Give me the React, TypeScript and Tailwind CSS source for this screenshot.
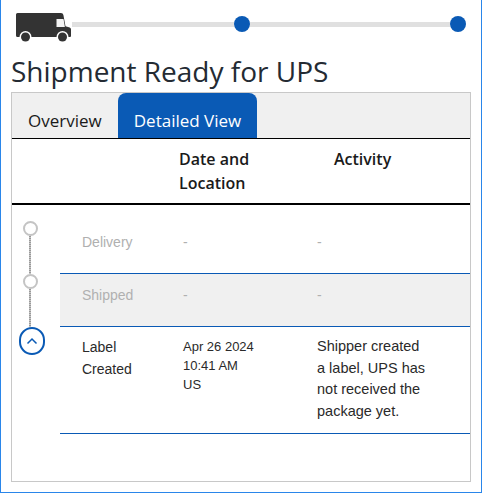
const sans = "font-['Open_Sans',sans-serif]";
const arial = "font-['Liberation_Sans',Arial,sans-serif]";

function Truck() {
  return (
    <svg width="56" height="37" viewBox="0 0 56 37" className="block">
      <path
        d="M1.500 7h43.500q2 0 2.400 2l2.100 11.200 4.200 1.300q1.300.4 1.300 2V30q0 1-1 1H1.500Q0 31 0 29.500V8.500Q0 7 1.500 7z"
        fill="#333333"
      />
      <path d="M40.500 13h7l1.400 8h-8.400z" fill="#f4f4f4" />
      <circle cx="9.500" cy="31" r="6" fill="#ffffff" />
      <circle cx="9.500" cy="31" r="4.500" fill="#333333" />
      <circle cx="46.500" cy="31" r="6" fill="#ffffff" />
      <circle cx="46.500" cy="31" r="4.500" fill="#333333" />
    </svg>
  );
}

function Progress() {
  return (
    <div className="flex items-center h-[37px] pl-[15px] pr-[15px]">
      <div className="mt-[11px] flex items-center">
        <Truck />
      </div>
      <div className="w-[162px] h-[5px] bg-[#e0e0e0] mt-[11px]" />
      <div className="w-4 h-4 rounded-full bg-[#0a5ab5] mt-[11px]" />
      <div className="flex-1 h-[5px] bg-[#e0e0e0] mt-[11px]" />
      <div className="w-4 h-4 rounded-full bg-[#0a5ab5] mt-[11px]" />
    </div>
  );
}

function Rail() {
  return (
    <div className="w-[48px] flex flex-col items-start pl-[11px] pt-[16px] shrink-0">
      <div className="w-[15px] h-[15px] rounded-full border-2 border-[#c4c4c4] shrink-0" />
      <div className="h-[38px] w-[2px] bg-[repeating-linear-gradient(#999999_0_1px,#c8c8c8_1px_2px)] ml-[6px]" />
      <div className="w-[15px] h-[15px] rounded-full border-2 border-[#c4c4c4] shrink-0" />
      <div className="h-[38px] w-[2px] bg-[repeating-linear-gradient(#999999_0_1px,#c8c8c8_1px_2px)] ml-[6px]" />
      <div className="w-[26px] h-[28px] rounded-full border-2 border-[#0a5ab5] bg-white flex items-center justify-center shrink-0 -ml-[4px]">
        <svg width="12" height="8" viewBox="0 0 12 8">
          <path d="M1.500 6.500L6 2l4.500 4.500" fill="none" stroke="#0a5ab5" strokeWidth="1.500" />
        </svg>
      </div>
    </div>
  );
}

export default function App() {
  return (
    <div className="w-[482px] h-[493px] bg-white border-x border-b border-[#2a86ea] overflow-hidden">
      <Progress />
      <h1 className={`${sans} text-[28px] leading-[37px] text-[#242b33] pl-[10px] mt-[16px] whitespace-nowrap`}>
        Shipment Ready for UPS
      </h1>
      <div className="ml-[10px] mt-[2px] w-[460px] h-[390px] border border-[#c8c8c8]">
        <div className={`${sans} flex items-end h-[46px] bg-[#f0f0f0] border-b border-black text-[17px]`}>
          <div className="w-[106px] h-full flex items-center pl-[16px] pt-[11px] text-[#1a1a1a]">Overview</div>
          <div className="w-[139px] h-full flex items-center justify-center pt-[11px] text-white bg-[#0a5ab5] rounded-t-[8px]">
            Detailed View
          </div>
        </div>
        <div className={`${sans} flex h-[66px] border-b-2 border-black text-[16px] leading-[24px] font-semibold text-[#1a1a1a] pt-[8px]`}>
          <div className="w-[167px] shrink-0" />
          <div className="w-[155px] shrink-0">
            Date and
            <br />
            Location
          </div>
          <div>Activity</div>
        </div>
        <div className="flex">
          <Rail />
          <div className={`${arial} flex-1 text-[14px] leading-[22px]`}>
            <div className="flex h-[69px] border-b border-[#0a5ab5] text-[#b0b0b0] pt-[26px]">
              <div className="w-[123px] pl-[22px] shrink-0">Delivery</div>
              <div className="w-[134px] shrink-0">-</div>
              <div>-</div>
            </div>
            <div className="flex h-[53px] border-b border-[#0a5ab5] bg-[#f0f0f0] text-[#b0b0b0] pt-[10px]">
              <div className="w-[123px] pl-[22px] shrink-0">Shipped</div>
              <div className="w-[134px] shrink-0">-</div>
              <div>-</div>
            </div>
            <div className="flex h-[107px] border-b border-[#0a5ab5] text-[#2a2a2a] pt-[9px]">
              <div className="w-[123px] pl-[22px] shrink-0">
                Label
                <br />
                Created
              </div>
              <div className="w-[134px] shrink-0 leading-[19px] text-[13px] pt-[1px]">
                Apr 26 2024
                <br />
                10:41 AM
                <br />
                US
              </div>
              <div className="leading-[21.700px] text-[14.500px]">
                Shipper created
                <br />
                a label, UPS has
                <br />
                not received the
                <br />
                package yet.
              </div>
            </div>
          </div>
        </div>
      </div>
    </div>
  );
}
